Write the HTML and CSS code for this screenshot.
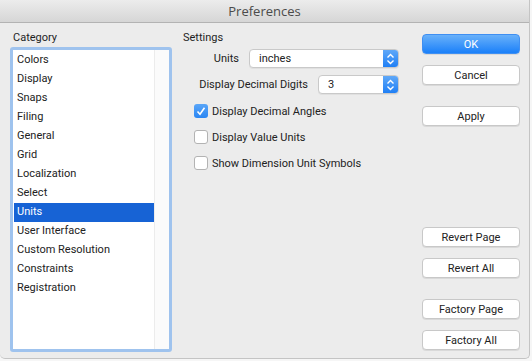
FILE: index.html
```html
<!DOCTYPE html>
<html lang="en">
<head>
    <meta charset="UTF-8">
    <meta name="viewport" content="width=device-width, initial-scale=1.0">
    <title>Preferences</title>
    <link rel="stylesheet" href="styles.css">
</head>
<body>
    <div class="window">
        <div class="titlebar">Preferences</div>
        <div class="content">
            <div class="category">
                <div class="group-label">Category</div>
                <div class="listbox">
                    <ul class="list">
                        <li>Colors</li>
                        <li>Display</li>
                        <li>Snaps</li>
                        <li>Filing</li>
                        <li>General</li>
                        <li>Grid</li>
                        <li>Localization</li>
                        <li>Select</li>
                        <li class="selected">Units</li>
                        <li>User Interface</li>
                        <li>Custom Resolution</li>
                        <li>Constraints</li>
                        <li>Registration</li>
                    </ul>
                    <div class="scrolltrack"></div>
                </div>
            </div>

            <div class="settings">
                <div class="group-label">Settings</div>
                <div class="field">
                    <span class="field-label">Units</span>
                    <div class="popup popup-wide">
                        <span>inches</span>
                        <span class="popup-arrows">
                            <svg width="15" height="18" viewBox="0 0 15 18"><path d="M4.5 7.5 L7.5 4.5 L10.5 7.5 M4.5 10.5 L7.5 13.5 L10.5 10.5" fill="none" stroke="#fff" stroke-width="1.4"/></svg>
                        </span>
                    </div>
                </div>
                <div class="field">
                    <span class="field-label">Display Decimal Digits</span>
                    <div class="popup popup-narrow">
                        <span>3</span>
                        <span class="popup-arrows">
                            <svg width="15" height="18" viewBox="0 0 15 18"><path d="M4.5 7.5 L7.5 4.5 L10.5 7.5 M4.5 10.5 L7.5 13.5 L10.5 10.5" fill="none" stroke="#fff" stroke-width="1.4"/></svg>
                        </span>
                    </div>
                </div>

                <div class="checks">
                    <label class="check">
                        <span class="box checked">
                            <svg width="14" height="14" viewBox="0 0 14 14"><path d="M3.5 7.5 L6 10.2 L10.5 3.8" fill="none" stroke="#fff" stroke-width="1.6"/></svg>
                        </span>
                        Display Decimal Angles
                    </label>
                    <label class="check">
                        <span class="box"></span>
                        Display Value Units
                    </label>
                    <label class="check">
                        <span class="box"></span>
                        Show Dimension Unit Symbols
                    </label>
                </div>
            </div>

            <div class="actions">
                <button class="btn btn-default">OK</button>
                <button class="btn">Cancel</button>
                <button class="btn btn-apply">Apply</button>
                <button class="btn btn-revert">Revert Page</button>
                <button class="btn">Revert All</button>
                <button class="btn btn-factory">Factory Page</button>
                <button class="btn">Factory All</button>
            </div>
        </div>
    </div>
</body>
</html>
```

FILE: styles.css
```css
body {
    margin: 0;
    background-color: #f6f6f6;
    font-family: Roboto, "Liberation Sans", sans-serif;
    font-size: 11px;
    color: #222;
}
.window {
    width: 529px;
    height: 358px;
    background-color: #ececec;
    border-right: 1px solid #c4c4c4;
    border-bottom: 1px solid #c4c4c4;
    border-radius: 0 0 5px 5px;
    overflow: hidden;
}
.titlebar {
    height: 22px;
    line-height: 22px;
    text-align: center;
    font-family: "Open Sans", sans-serif;
    font-size: 13px;
    color: #4b4b4b;
    background: linear-gradient(#ececec, #d6d6d6);
    border-bottom: 1px solid #b3b3b3;
}
.content {
    display: flex;
    padding: 7px 0 0 10px;
}
.group-label {
    height: 16px;
    line-height: 16px;
    padding-left: 3px;
    color: #1f1f1f;
}

/* category list */
.category {
    width: 162px;
}
.listbox {
    display: flex;
    height: 299px;
    margin-top: 1px;
    background-color: #fff;
    border: 3px solid #9fc3ee;
    border-radius: 3px;
}
.list {
    flex: 1;
    list-style: none;
    margin: 0;
    padding: 1px 0 0 1px;
}
.list li {
    height: 19px;
    line-height: 18px;
    padding-left: 3px;
}
.list li.selected {
    background-color: #1763d5;
    color: #fff;
}
.scrolltrack {
    width: 14px;
    background-color: #fbfbfb;
    border-left: 1px solid #ececec;
}

/* settings */
.settings {
    width: 216px;
    margin-left: 11px;
}
.settings .group-label {
    padding-left: 0;
}
.field {
    display: flex;
    justify-content: flex-end;
    align-items: center;
    gap: 10px;
    margin-top: 2px;
    height: 20px;
}
.field + .field {
    margin-top: 6px;
}
.popup {
    display: flex;
    justify-content: space-between;
    align-items: center;
    height: 17px;
    padding-left: 9px;
    background-color: #fff;
    border: 1px solid #c9c9c9;
    border-radius: 4px;
    box-shadow: 0 1px 0 rgba(0,0,0,0.05);
    overflow: hidden;
}
.popup-wide {
    width: 139px;
}
.popup-narrow {
    width: 70px;
}
.popup-arrows {
    display: flex;
    width: 15px;
    height: 17px;
    background: linear-gradient(#5fa8f8, #1f7ff5);
}
.checks {
    padding: 10px 0 0 11px;
}
.check {
    display: flex;
    align-items: center;
    gap: 4px;
    height: 14px;
    margin-bottom: 12px;
}
.box {
    display: flex;
    width: 12px;
    height: 12px;
    background-color: #fff;
    border: 1px solid #b3b3b3;
    border-radius: 3px;
}
.box.checked {
    width: 14px;
    height: 14px;
    border: none;
    background: linear-gradient(#5aa6f8, #2a86f3);
}

/* buttons */
.actions {
    display: flex;
    flex-direction: column;
    margin: 4px 0 0 23px;
}
.btn {
    box-sizing: border-box;
    width: 98px;
    height: 20px;
    margin-bottom: 11px;
    padding: 0;
    font-family: inherit;
    font-size: 11px;
    color: #222;
    background-color: #fff;
    border: 1px solid #c8c8c8;
    border-radius: 4px;
    box-shadow: 0 1px 0 rgba(0,0,0,0.08);
}
.btn-default {
    color: #fff;
    border-color: #3f8ff2;
    background: linear-gradient(#69b1fa, #1b80f9);
}
.btn-apply {
    margin-top: 10px;
}
.btn-revert {
    margin-top: 90px;
}
.btn-factory {
    margin-top: 10px;
}
```
